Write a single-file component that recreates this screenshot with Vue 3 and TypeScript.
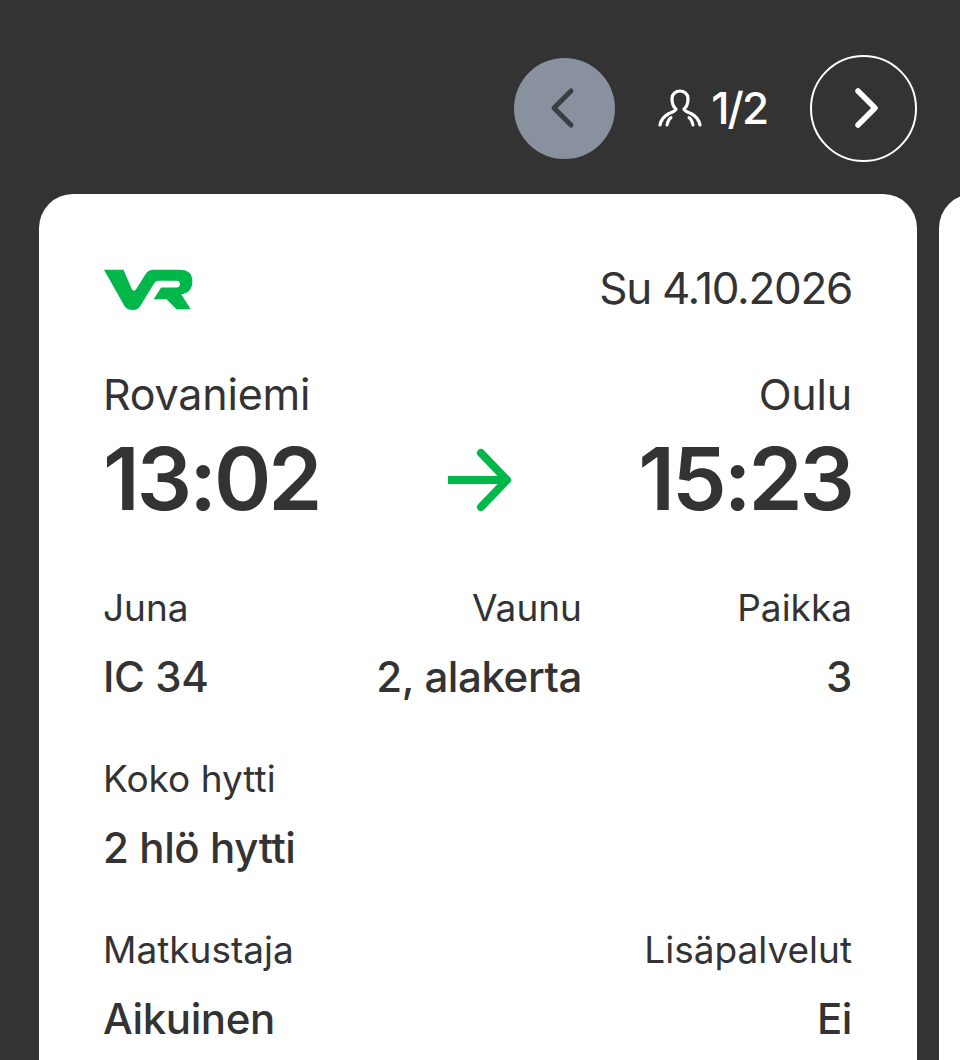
<template>
  <div class="page">
    <header class="pager">
      <button class="nav nav-prev" aria-label="Edellinen">
        <svg width="30" height="48" viewBox="0 0 30 48" fill="none">
          <path d="M21 7 4 24l17 17" stroke="#3a3d42" stroke-width="5" stroke-linecap="round" stroke-linejoin="round" />
        </svg>
      </button>
      <div class="counter">
        <svg class="person" width="44" height="40" viewBox="0 0 44 40" fill="none">
          <path d="M2 37C3 32 6 28 11 25.500 14 24 18 23 18 21 14 18 14 14 14 10.500 14 6 18 3 22 3S30 6 30 10.500C30 14 30 18 26 21 26 23 30 24 33 25.500 38 28 41 32 42 37" stroke="#fff" stroke-width="3.200" stroke-linecap="round" stroke-linejoin="round" />
          <path d="M9 37c.5-3 2-6 4-7.500M35 37c-.5-3-2-6-4-7.500" stroke="#fff" stroke-width="3" stroke-linecap="round" />
        </svg>
        <span>1/2</span>
      </div>
      <button class="nav nav-next" aria-label="Seuraava">
        <svg width="30" height="48" viewBox="0 0 30 48" fill="none">
          <path d="M9 7 26 24 9 41" stroke="#fff" stroke-width="5.500" stroke-linecap="round" stroke-linejoin="round" />
        </svg>
      </button>
    </header>

    <div class="cards">
      <section class="card">
        <div class="top">
          <svg class="logo" width="90" height="42" viewBox="40 60 266 125">
            <path fill="#00b74a" d="M42 62H100L124 118Q131 132 139 118L168 72Q175 62 190 62H268Q305 62 305 97 305 130 272 135L300 180H258L228 150H190L212 115H258Q268 115 268 105 268 95 258 95H205Q195 95 190 105L150 170Q143 182 128 182 110 182 103 170Z" />
          </svg>
          <span class="date">Su 4.10.2026</span>
        </div>

        <div class="route">
          <div class="stop">
            <div class="station">Rovaniemi</div>
            <div class="time">13:02</div>
          </div>
          <svg class="arrow" width="66" height="64" viewBox="0 0 66 64" fill="none">
            <path d="M2 32h58" stroke="#00b74a" stroke-width="8" />
            <path d="M35 5l26 27-26 27" stroke="#00b74a" stroke-width="8" stroke-linecap="round" stroke-linejoin="round" />
          </svg>
          <div class="stop end">
            <div class="station">Oulu</div>
            <div class="time">15:23</div>
          </div>
        </div>

        <div class="info three">
          <div v-for="f in trainFields" :key="f.label" class="field" :class="f.align">
            <div class="label">{{ f.label }}</div>
            <div class="value">{{ f.value }}</div>
          </div>
        </div>

        <div class="info">
          <div class="field">
            <div class="label">Koko hytti</div>
            <div class="value">2 hlö hytti</div>
          </div>
        </div>

        <div class="info split">
          <div class="field">
            <div class="label">Matkustaja</div>
            <div class="value">Aikuinen</div>
          </div>
          <div class="field end">
            <div class="label">Lisäpalvelut</div>
            <div class="value">Ei</div>
          </div>
        </div>
      </section>
      <section class="card next-card"></section>
    </div>
  </div>
</template>

<script setup lang="ts">
interface Field {
  label: string
  value: string
  align?: string
}

const trainFields: Field[] = [
  { label: 'Juna', value: 'IC 34' },
  { label: 'Vaunu', value: '2, alakerta', align: 'end' },
  { label: 'Paikka', value: '3', align: 'end' }
]
</script>

<style scoped>
.page {
  width: 960px;
  height: 1060px;
  overflow: hidden;
  background: #333333;
  color: #333333;
  font-family: Inter, "Liberation Sans", sans-serif;
}

.pager {
  height: 194px;
  box-sizing: border-box;
  padding: 22px 43px 0 0;
  display: flex;
  justify-content: flex-end;
  align-items: center;
  gap: 43px;
}

.nav {
  display: flex;
  align-items: center;
  justify-content: center;
  padding: 0;
  border-radius: 50%;
  box-sizing: border-box;
  background: transparent;
}

.nav-prev {
  width: 101px;
  height: 101px;
  border: 0;
  background: #8a919e;
}

.nav-next {
  width: 107px;
  height: 107px;
  border: 2.500px solid #fff;
}

.counter {
  display: flex;
  align-items: center;
  gap: 9px;
  color: #fff;
  font-size: 44px;
  font-weight: 500;
  letter-spacing: -2px;
}

.cards {
  display: flex;
  gap: 22px;
  padding-left: 39px;
}

.card {
  flex: 0 0 878px;
  height: 900px;
  box-sizing: border-box;
  padding: 66px 65px 66px 64px;
  background: #fff;
  border-radius: 34px;
}

.next-card {
  padding: 0;
}

.top,
.route,
.split {
  display: flex;
  justify-content: space-between;
}

.top {
  align-items: center;
  height: 60px;
}

.date {
  margin-bottom: 5px;
  font-size: 44px;
  font-weight: 400;
  letter-spacing: -1.300px;
}

.route {
  align-items: flex-end;
  margin-top: 50px;
}

.station {
  font-size: 43px;
  line-height: 48px;
  letter-spacing: -0.2px;
}

.time {
  margin-top: 11px;
  font-size: 87px;
  line-height: 100px;
  font-weight: 600;
  letter-spacing: -3px;
}

.end {
  text-align: right;
}

.arrow {
  margin-bottom: 17px;
}

.info {
  margin-top: 56px;
}

.three {
  display: grid;
  grid-template-columns: 1fr 1fr 270px;
  margin-top: 57px;
}

.label {
  font-size: 37px;
  line-height: 44px;
}

.value {
  margin-top: 23px;
  font-size: 42px;
  line-height: 48px;
  font-weight: 500;
  letter-spacing: -0.4px;
}
</style>
